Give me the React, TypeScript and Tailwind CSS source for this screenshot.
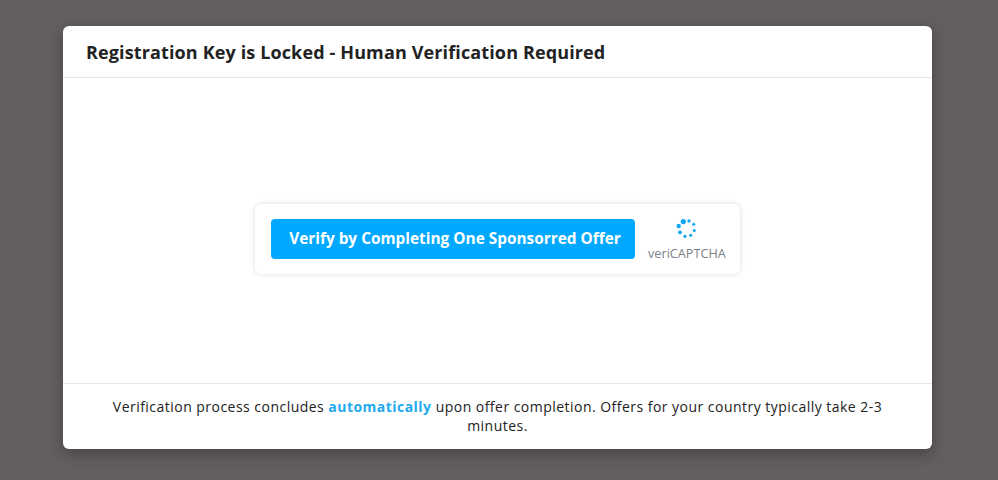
const dots = [
  { cx: 7.3, cy: 4.6, r: 2.6 },
  { cx: 13, cy: 4, r: 1.7 },
  { cx: 17.7, cy: 7.3, r: 1.5 },
  { cx: 18.3, cy: 13.6, r: 1.5 },
  { cx: 14.7, cy: 18.3, r: 1.5 },
  { cx: 9, cy: 19.3, r: 1.6 },
  { cx: 4, cy: 15.3, r: 1.9 },
  { cx: 2.7, cy: 9, r: 2.2 },
];

function Spinner() {
  return (
    <svg width="22" height="22" viewBox="0 0 22 22" className="block">
      {dots.map((d, i) => (
        <circle key={i} cx={d.cx} cy={d.cy} r={d.r} fill="#0ea5f5" />
      ))}
    </svg>
  );
}

export default function App() {
  return (
    <div className="h-[480px] w-full overflow-hidden bg-[#645f5e] pt-[26px] pl-[63px] font-['Open_Sans',sans-serif]">
      <div className="flex h-[423px] w-[869px] flex-col rounded-md bg-white shadow-[0_5px_15px_rgba(0,0,0,0.3)]">
        <header className="flex h-[52px] items-center border-b border-[#e5e5e5] px-[23px] pt-[2px]">
          <h1 className="text-[18px] font-bold tracking-[0.13px] text-[#222222]">
            Registration Key is Locked - Human Verification Required
          </h1>
        </header>

        <main className="flex flex-1 items-center justify-center">
          <div className="mt-[17px] flex h-[70px] w-[485px] items-center rounded-md bg-white pl-4 shadow-[0_0_5px_rgba(0,0,0,0.15)]">
            <button className="h-10 w-[364px] rounded bg-[#00a9ff] pl-1 text-center text-[15.4px] font-bold text-white">
              Verify by Completing One Sponsorred Offer
            </button>
            <div className="ml-[13px] flex flex-col items-center">
              <Spinner />
              <span className="mt-[5px] text-[12.7px] leading-[18px] text-[#7b8087]">veriCAPTCHA</span>
            </div>
          </div>
        </main>

        <footer className="h-[66px] border-t border-[#e5e5e5] px-[40px] pt-[13px] text-center text-[14px] leading-[19px] tracking-[0.47px] text-[#222222]">
          Verification process concludes <span className="font-bold text-[#22aaee]">automatically</span> upon
          offer completion. Offers for your country typically take 2-3 minutes.
        </footer>
      </div>
    </div>
  );
}
